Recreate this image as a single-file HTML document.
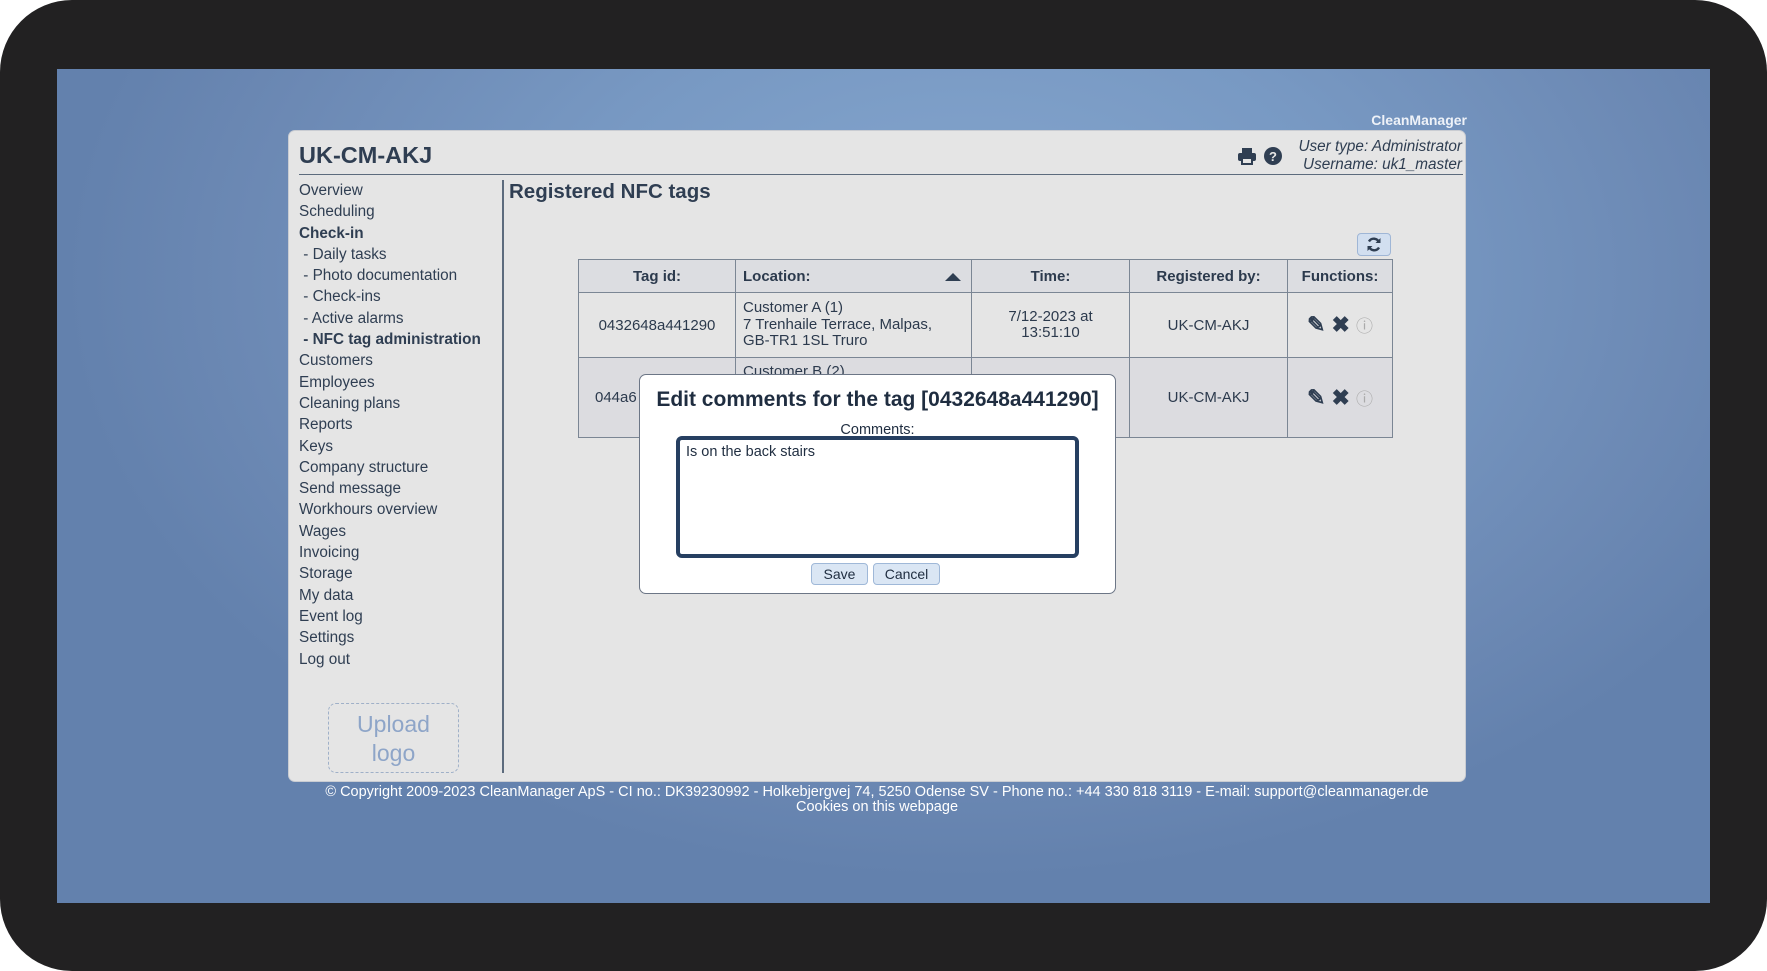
<!DOCTYPE html>
<html><head><meta charset="utf-8"><style>
*{margin:0;padding:0;box-sizing:border-box}
html,body{width:1767px;height:971px;overflow:hidden;background:#fff;font-family:"Liberation Sans",sans-serif}
#frame{position:absolute;left:0;top:0;width:1767px;height:971px;background:#222122;border-radius:72px}
#scr{position:absolute;left:57px;top:69px;width:1653px;height:834px;background:radial-gradient(ellipse 900px 600px at 55% 25%,#86a7cf 0%,#7899c3 45%,#6c89b4 80%,#6381ad 100%);overflow:hidden}
.a{position:absolute}
#panel{position:absolute;left:288px;top:130px;width:1178px;height:652px;background:#e5e5e5;border-radius:7px;border:1px solid #c9ccd2}
.nav{position:absolute;left:299px;font-size:15.3px;color:#2f3e52;line-height:21.3px}
table{border-collapse:collapse;position:absolute;left:578px;top:259px;font-size:15px;color:#2c3a4d}
td,th{border:1px solid #7b8694;text-align:center}
th{background:#dcdde1;height:33px}
.btn{position:absolute;background:#dae6f4;border:1px solid #9fb8d8;border-radius:4px;font-size:14px;color:#1f2d40;text-align:center}
.ic{font-size:22px;font-weight:bold;color:#2f3e52}
</style></head><body>
<div id="frame"></div>
<div id="scr"></div>
<div class="a" style="left:1300px;top:112px;width:167px;text-align:right;color:#eef2f8;font-weight:bold;font-size:14px">CleanManager</div>
<div id="panel"></div>
<div class="a" style="left:299px;top:142px;font-size:23.5px;font-weight:bold;color:#2f3e52">UK-CM-AKJ</div>
<div class="a" style="left:299px;top:174px;width:1164px;height:1px;background:#5c6b7d"></div>
<svg class="a" style="left:1237px;top:147px" width="20" height="18" viewBox="0 0 20 18"><rect x="5" y="1" width="10" height="5" fill="#2f3e52"/><rect x="1" y="6" width="18" height="8" rx="2" fill="#2f3e52"/><rect x="5" y="11" width="10" height="6" fill="#e5e5e5" stroke="#2f3e52" stroke-width="2"/></svg>
<svg class="a" style="left:1264px;top:147px" width="18" height="18" viewBox="0 0 18 18"><circle cx="9" cy="9" r="9" fill="#2f3e52"/><text x="9" y="14" text-anchor="middle" font-size="13" font-weight="bold" fill="#e5e5e5" font-family="Liberation Sans">?</text></svg>
<div class="a" style="left:1260px;top:138px;width:202px;text-align:right;font-style:italic;font-size:15.3px;color:#2f3e52;line-height:18px">User type: Administrator<br>Username: uk1_master</div>
<div class="nav" style="top:180px">Overview<br>Scheduling<br><b>Check-in</b><br>&nbsp;- Daily tasks<br>&nbsp;- Photo documentation<br>&nbsp;- Check-ins<br>&nbsp;- Active alarms<br>&nbsp;<b>- NFC tag administration</b><br>Customers<br>Employees<br>Cleaning plans<br>Reports<br>Keys<br>Company structure<br>Send message<br>Workhours overview<br>Wages<br>Invoicing<br>Storage<br>My data<br>Event log<br>Settings<br>Log out</div>
<div class="a" style="left:328px;top:703px;width:131px;height:70px;border:1px dashed #9fb0c8;border-radius:8px;color:#8ea5c8;font-size:23px;text-align:center;line-height:29px;padding-top:6px">Upload<br>logo</div>
<div class="a" style="left:502px;top:180px;width:2px;height:593px;background:#5c6b7d"></div>
<div class="a" style="left:509px;top:180px;font-size:20.5px;font-weight:bold;color:#2f3e52">Registered NFC tags</div>
<div class="a" style="left:1357px;top:233px;width:34px;height:23px;background:#d2dff0;border:1px solid #9fb6d6;border-radius:4px"></div>
<svg class="a" style="left:1366px;top:236px" width="16" height="17" viewBox="0 0 16 16"><path d="M13 6A5.5 5.5 0 0 0 3 5M3 10a5.5 5.5 0 0 0 10 1" fill="none" stroke="#2f3e52" stroke-width="2.4"/><path d="M14.5 1.5v5h-5zM1.5 14.5v-5h5z" fill="#2f3e52"/></svg>
<table>
<tr><th style="width:157px">Tag id:</th><th style="width:236px;text-align:left;padding-left:7px;position:relative">Location:<span style="position:absolute;right:10px;top:13px;width:0;height:0;border-left:8px solid transparent;border-right:8px solid transparent;border-bottom:8px solid #2f3e52"></span></th><th style="width:158px">Time:</th><th style="width:158px">Registered by:</th><th style="width:105px">Functions:</th></tr>
<tr style="height:65px;background:#e5e5e5"><td>0432648a441290</td><td style="text-align:left;padding-left:7px;line-height:16.5px">Customer A (1)<br>7 Trenhaile Terrace, Malpas,<br>GB-TR1 1SL Truro</td><td style="line-height:16.5px">7/12-2023 at<br>13:51:10</td><td>UK-CM-AKJ</td><td class="ic">✎ ✖ <span style="color:#aaa;font-size:17px;font-weight:normal">ⓘ</span></td></tr>
<tr style="height:80px;background:#dcdce0"><td style="text-align:left;padding-left:16px">044a6</td><td style="text-align:left;padding-left:7px;vertical-align:top;padding-top:5px">Customer B (2)</td><td></td><td>UK-CM-AKJ</td><td class="ic">✎ ✖ <span style="color:#aaa;font-size:17px;font-weight:normal">ⓘ</span></td></tr>
</table>
<div class="a" style="left:639px;top:374px;width:477px;height:220px;background:#fff;border:1px solid #6c7686;border-radius:7px"></div>
<div class="a" style="left:639px;top:388px;width:477px;text-align:center;font-size:21px;font-weight:bold;color:#1f2d40">Edit comments for the tag [0432648a441290]</div>
<div class="a" style="left:639px;top:422px;width:477px;text-align:center;font-size:14.5px;color:#1f2d40">Comments:</div>
<div class="a" style="left:676px;top:436px;width:403px;height:122px;border:4px solid #263f61;border-radius:6px;background:#fff;font-size:14.5px;color:#1f2d40;padding:4px 6px">Is on the back stairs</div>
<div class="btn" style="left:811px;top:563px;width:57px;height:22px;line-height:20px">Save</div>
<div class="btn" style="left:873px;top:563px;width:67px;height:22px;line-height:20px">Cancel</div>
<div class="a" style="left:277px;top:785px;width:1200px;text-align:center;color:#fff;font-size:14.5px;line-height:15px;white-space:nowrap">© Copyright 2009-2023 CleanManager ApS - CI no.: DK39230992 - Holkebjergvej 74, 5250 Odense SV - Phone no.: +44 330 818 3119 - E-mail: support@cleanmanager.de<br>Cookies on this webpage</div>
</body></html>
